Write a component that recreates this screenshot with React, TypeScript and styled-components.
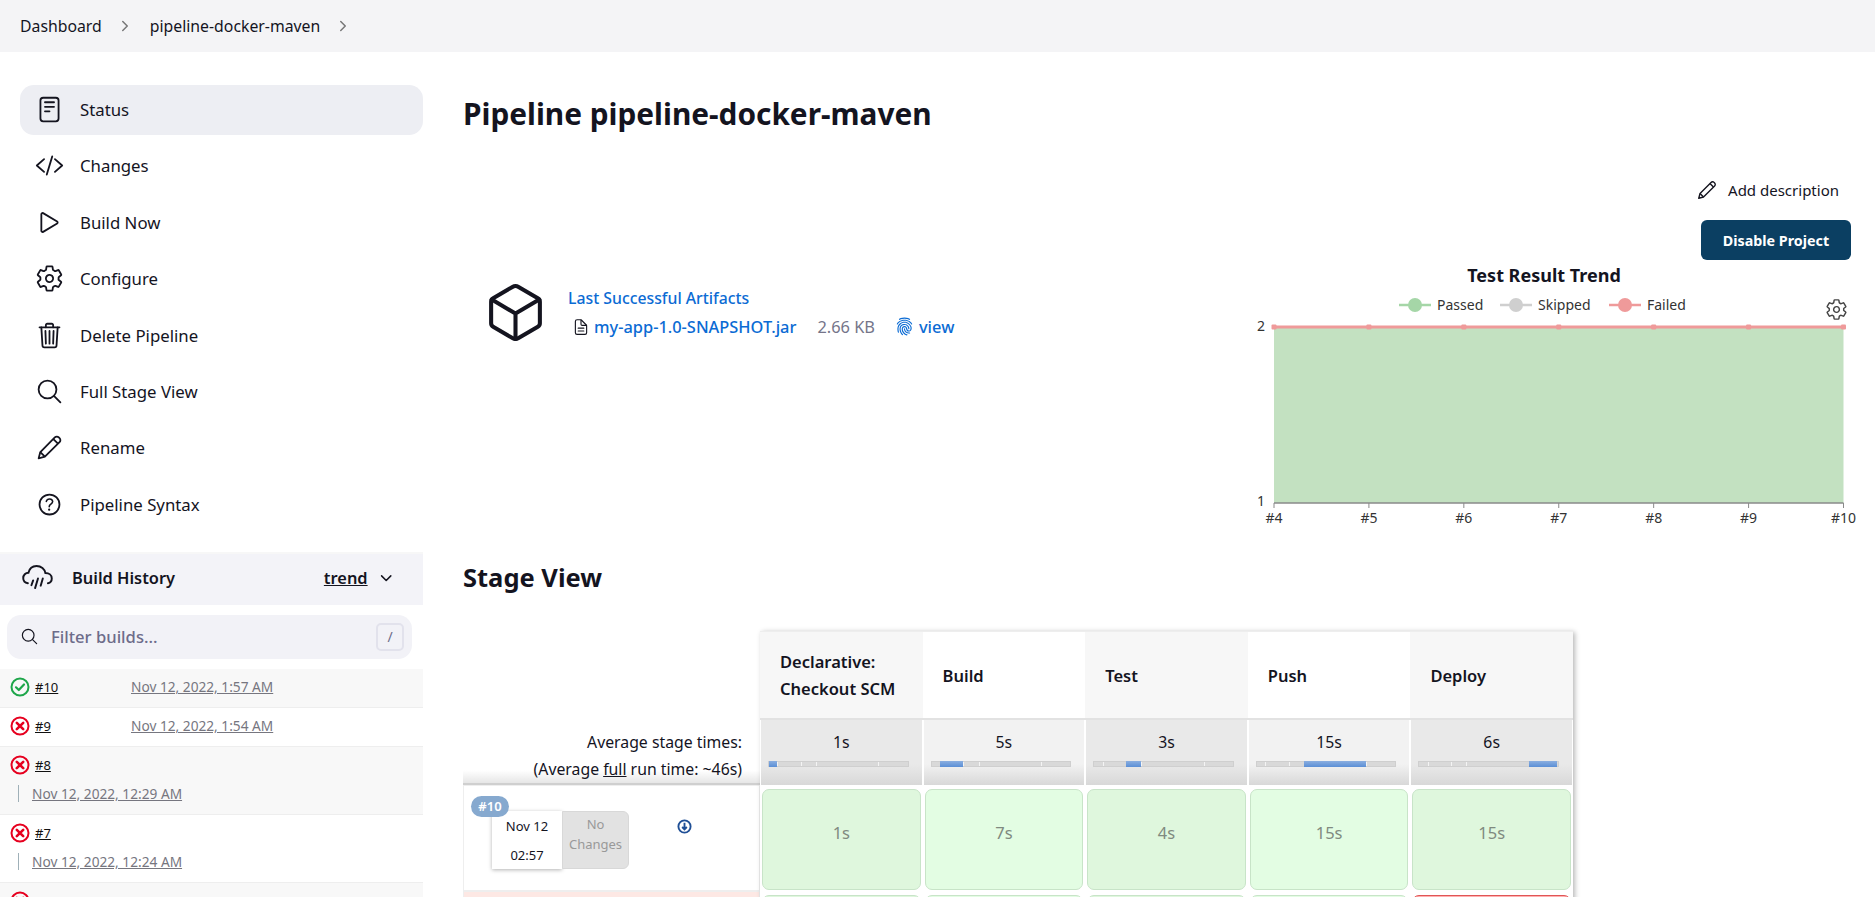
import React from 'react';
import styled, { createGlobalStyle } from 'styled-components';
import {
  IoReaderOutline,
  IoCodeSlashOutline,
  IoPlayOutline,
  IoSettingsOutline,
  IoTrashOutline,
  IoSearchOutline,
  IoHelpCircleOutline,
  IoChevronForward,
  IoChevronDown,
  IoCubeOutline,
  IoDocumentTextOutline,
  IoFingerPrint,
} from 'react-icons/io5';

const GlobalStyle = createGlobalStyle`
  html, body {
    margin: 0;
    height: 100%;
    overflow: hidden;
    background: #fff;
    font-family: 'Noto Sans', 'Open Sans', sans-serif;
    color: #14141f;
  }
  * { box-sizing: border-box; }
`;

const Page = styled.div`
  height: 897px;
  overflow: hidden;
`;

const Breadcrumb = styled.nav`
  height: 52px;
  background: #f4f4f6;
  display: flex;
  align-items: center;
  padding-left: 20px;
  font-size: 15.8px;
  svg { color: #777; font-size: 16px; margin: 0 17px 0 15px; }
`;

const Body = styled.div`
  display: flex;
`;

const Side = styled.aside`
  width: 423px;
  flex: none;
  padding-top: 33px;
`;

const TaskList = styled.ul`
  list-style: none;
  margin: 0 0 0 20px;
  padding: 0;
`;

const Task = styled.li<{ $active?: boolean }>`
  height: 50px;
  margin-bottom: 6.4px;
  display: flex;
  align-items: center;
  gap: 16px;
  padding: 0 0 1px 15px;
  border-radius: 14px;
  font-size: 16.8px;
  background: ${({ $active }) => ($active ? '#edeef3' : 'transparent')};
  svg { width: 29px; height: 29px; flex: none; }
`;

const HistoryHeader = styled.div`
  margin-top: 22px;
  height: 53px;
  background: #f3f3f8;
  border-top: 2px solid #f7f7f7;
  display: flex;
  align-items: center;
  padding: 0 29px 3px 22px;
  font-size: 16.4px;
  font-weight: 600;
`;

const CloudIcon = styled.svg`
  width: 31px;
  height: 27px;
  margin-right: 19px;
  flex: none;
`;

const HistoryTitle = styled.span`
  flex: 1;
`;

const TrendLink = styled.span`
  text-decoration: underline;
  margin-right: 10px;
`;

const FilterBox = styled.div`
  margin: 10px 11px 10px 7px;
  height: 44px;
  background: #f2f2f7;
  border-radius: 14px;
  display: flex;
  align-items: center;
  padding: 0 8px 0 13px;
  font-size: 16.6px;
  font-weight: 500;
  color: #6d6c8a;
  svg { font-size: 19px; color: #14141f; margin-right: 12px; }
`;

const FilterText = styled.span`
  flex: 1;
`;

const SlashKey = styled.span`
  width: 28px;
  height: 28px;
  border: 2px solid #e2e2ec;
  border-radius: 5px;
  display: flex;
  align-items: center;
  justify-content: center;
  font-size: 14px;
  font-weight: 400;
`;

const BuildRow = styled.div<{ $tall?: boolean; $shaded?: boolean }>`
  height: ${({ $tall }) => ($tall ? '68px' : '39px')};
  background: ${({ $shaded }) => ($shaded ? '#f8f8f8' : '#fff')};
  border-bottom: 1px solid #eeeeee;
  padding: 8px 0 0 10px;
`;

const BuildTop = styled.div`
  display: flex;
  align-items: center;
  gap: 5px;
  height: 20px;
`;

const BuildNumber = styled.span`
  width: 91px;
  color: #111;
  text-decoration: underline;
  font-size: 13px;
`;

const BuildDate = styled.span`
  color: #76767f;
  text-decoration: underline;
  font-size: 13.7px;
`;

const BuildDetail = styled.div`
  margin: 10px 0 0 8px;
  padding-left: 13px;
  line-height: 16px;
  border-left: 1px solid #9fb0b8;
`;

const Main = styled.main`
  flex: 1;
  min-width: 0;
  padding: 44px 24px 0 40px;
`;

const Title = styled.h1`
  margin: 0;
  font-size: 29.8px;
  line-height: 36px;
  font-weight: 700;
`;

const Actions = styled.div`
  margin-top: 46px;
  display: flex;
  flex-direction: column;
  align-items: flex-end;
`;

const AddDescription = styled.div`
  height: 24px;
  display: flex;
  align-items: center;
  gap: 10px;
  padding-right: 12px;
  font-size: 15px;
  svg { width: 22px; height: 22px; }
`;

const DisableButton = styled.button`
  margin-top: 18px;
  width: 150px;
  height: 40px;
  border: 0;
  border-radius: 6px;
  background: #0b3f62;
  color: #fff;
  font: 700 14.3px 'Noto Sans', sans-serif;
`;

const Summary = styled.div`
  display: flex;
  justify-content: space-between;
  height: 270px;
`;

const Artifacts = styled.div`
  display: flex;
  gap: 20px;
  padding: 20px 0 0 20px;
`;

const CubeIcon = styled(IoCubeOutline)`
  font-size: 65px;
`;

const ArtifactText = styled.div`
  padding-top: 7px;
  color: #0b6bd4;
  font-size: 15.8px;
  font-weight: 500;
`;

const ArtifactRow = styled.div`
  margin: 6px 0 0 4px;
  display: flex;
  align-items: center;
  font-size: 16.4px;
  svg { flex: none; }
`;

const FileIcon = styled(IoDocumentTextOutline)`
  color: #14141f;
  font-size: 18px;
  margin-right: 4px;
`;

const FileSize = styled.span`
  color: #75758a;
  font-weight: 400;
  margin: 0 20px 0 21px;
`;

const PrintIcon = styled(IoFingerPrint)`
  font-size: 19px;
  margin-right: 5px;
`;

const ChartSvg = styled.svg`
  width: 635px;
  height: 270px;
  margin-right: -24px;
  flex: none;
  font-family: 'Noto Sans', sans-serif;
`;

const StageHeading = styled.h2`
  margin: 31px 0 0;
  font-size: 25.5px;
  line-height: 32px;
  font-weight: 700;
`;

const StageGrid = styled.div`
  position: relative;
  margin-top: 38px;
  display: grid;
  grid-template-columns: 297px repeat(5, 162.6px);
  grid-template-rows: 89px 65px 106px 106px;
  width: 1110px;
  &::after {
    content: '';
    position: absolute;
    left: 297px;
    right: 0;
    top: 0;
    bottom: 0;
    pointer-events: none;
    box-shadow: 2px 1px 5px rgba(0, 0, 0, 0.28);
  }
`;

const LeftBlank = styled.div``;

const StageHead = styled.div<{ $odd: boolean }>`
  background: ${({ $odd }) => ($odd ? '#f7f7f7' : '#fff')};
  border-top: 1px solid #eee;
  border-bottom: 2px solid #e2e2e2;
  display: flex;
  align-items: center;
  padding: 0 20px;
  font-size: 16.5px;
  font-weight: 600;
  line-height: 27px;
`;

const AverageLabel = styled.div`
  background: linear-gradient(#fff 80%, #e6e6e6);
  border-bottom: 2px solid #cfcfcf;
  text-align: right;
  padding: 9px 18px 0 0;
  font-size: 15.8px;
  line-height: 27px;
`;

const FullWord = styled.span`
  text-decoration: underline;
`;

const AverageCell = styled.div<{ $odd: boolean }>`
  background: linear-gradient(${({ $odd }) => ($odd ? '#e9e9e9' : '#f2f2f2')} 68%, #d8d8d8);
  border-left: 1px solid #fff;
  border-right: 1px solid #fff;
  padding: 10px 8px 0;
  text-align: center;
  font-size: 15.8px;
  line-height: 24px;
`;

const TimeBar = styled.div`
  position: relative;
  height: 6px;
  margin: 7px 5px 0 -1px;
  background: #d9d9d9;
  border: 1px solid #cfcfcf;
`;

const TimeTick = styled.i`
  position: absolute;
  top: 0;
  bottom: 0;
  width: 1px;
  background: #f4f4f4;
`;

const TimeFill = styled.i`
  position: absolute;
  top: -1px;
  bottom: -1px;
  background: linear-gradient(#8aaee0, #5b8fd6);
`;

const BuildCell = styled.div<{ $failed?: boolean }>`
  position: relative;
  border: 1px solid #eee;
  background: ${({ $failed }) => ($failed ? '#fde8e4' : '#fff')};
`;

const BuildBadge = styled.span`
  position: absolute;
  left: 7px;
  top: 10px;
  z-index: 1;
  width: 38px;
  height: 21px;
  border-radius: 11px;
  background: #86a9cf;
  color: #fff;
  font-size: 13px;
  font-weight: 600;
  text-align: center;
  line-height: 21px;
`;

const BuildCard = styled.div`
  margin: 25px 0 0 28px;
  display: flex;
  height: 58px;
  width: 137px;
`;

const DateBox = styled.div`
  width: 70px;
  background: #fff;
  padding-top: 1px;
  box-shadow: 0 1px 4px rgba(0, 0, 0, 0.3);
  text-align: center;
  font-size: 13px;
  line-height: 29px;
`;

const ChangesBox = styled.div`
  width: 67px;
  background: #e2e2e2;
  border-radius: 0 6px 6px 0;
  border: 1px solid #d8d8d8;
  color: #999;
  text-align: center;
  font-size: 13px;
  line-height: 20px;
  padding-top: 2px;
`;

const DownloadIcon = styled.svg`
  position: absolute;
  left: 213px;
  top: 33px;
`;

const StageCell = styled.div<{ $odd: boolean; $failed?: boolean }>`
  margin: 4px 2px 1px;
  border-radius: 7px;
  border: 1px solid ${({ $failed }) => ($failed ? '#e05555' : '#c8e4c8')};
  background: ${({ $odd, $failed }) => ($failed ? '#ffb0b0' : $odd ? '#dff7dd' : '#e3fde3')};
  color: #808a80;
  display: flex;
  align-items: center;
  justify-content: center;
  font-size: 16.5px;
  padding-bottom: 14px;
`;

function PencilIcon() {
  return (
    <svg viewBox="0 0 24 24" fill="none" stroke="currentColor" strokeWidth="1.5" strokeLinejoin="round">
      <path d="M3 21l1.4-5.2L16.4 3.7a2.3 2.3 0 0 1 3.3 0l.6.6a2.3 2.3 0 0 1 0 3.3L8.2 19.6z" />
      <path d="M4.4 15.8l3.8 3.8M15.2 5l3.8 3.8" />
    </svg>
  );
}

const tasks = [
  { label: 'Status', icon: <IoReaderOutline />, active: true },
  { label: 'Changes', icon: <IoCodeSlashOutline /> },
  { label: 'Build Now', icon: <IoPlayOutline /> },
  { label: 'Configure', icon: <IoSettingsOutline /> },
  { label: 'Delete Pipeline', icon: <IoTrashOutline /> },
  { label: 'Full Stage View', icon: <IoSearchOutline /> },
  { label: 'Rename', icon: <PencilIcon /> },
  { label: 'Pipeline Syntax', icon: <IoHelpCircleOutline /> },
];

const builds = [
  { id: '#10', date: 'Nov 12, 2022, 1:57 AM', ok: true },
  { id: '#9', date: 'Nov 12, 2022, 1:54 AM' },
  { id: '#8', date: 'Nov 12, 2022, 12:29 AM', tall: true },
  { id: '#7', date: 'Nov 12, 2022, 12:24 AM', tall: true },
  { id: '#6', date: 'Nov 12, 2022, 12:20 AM', tall: true },
];

const stages = [
  { name: 'Declarative: Checkout SCM', avg: '1s', left: 0, width: 6, run: '1s' },
  { name: 'Build', avg: '5s', left: 6, width: 17, run: '7s' },
  { name: 'Test', avg: '3s', left: 23, width: 11, run: '4s' },
  { name: 'Push', avg: '15s', left: 34, width: 45, run: '15s' },
  { name: 'Deploy', avg: '6s', left: 79, width: 20, run: '15s' },
];

const ticks = [6, 23, 34, 79];

const trendRuns = ['#4', '#5', '#6', '#7', '#8', '#9', '#10'];

const legend = [
  { label: 'Passed', color: '#a5d6a7', x: 159 },
  { label: 'Skipped', color: '#cfcfcf', x: 260 },
  { label: 'Failed', color: '#ef9a9a', x: 369 },
];

function StatusIcon({ ok }: { ok?: boolean }) {
  const color = ok ? '#1ea64a' : '#e6001f';
  return (
    <svg width="20" height="20" viewBox="0 0 20 20" fill="none">
      <circle cx="10" cy="10" r="8.5" stroke={color} strokeWidth="2" />
      {ok ? (
        <path d="M6 10.3l2.8 2.7L14 7.5" stroke={color} strokeWidth="2.2" strokeLinecap="round" strokeLinejoin="round" />
      ) : (
        <path d="M6.8 6.8l6.4 6.4M13.2 6.8l-6.4 6.4" stroke={color} strokeWidth="2.6" strokeLinecap="round" />
      )}
    </svg>
  );
}

function TrendChart() {
  const plotWidth = 569.5;
  const step = plotWidth / 6;
  return (
    <ChartSvg viewBox="0 0 635 270">
      <text x="304" y="22" textAnchor="middle" fontSize="18" fontWeight="700" fill="#14141f">
        Test Result Trend
      </text>
      {legend.map((item) => (
        <g key={item.label}>
          <line x1={item.x} x2={item.x + 32} y1="45" y2="45" stroke={item.color} strokeWidth="2.5" />
          <circle cx={item.x + 16} cy="45" r="7" fill={item.color} />
          <text x={item.x + 38} y="50" fontSize="14" fill="#333">
            {item.label}
          </text>
        </g>
      ))}
      <IoSettingsOutline x={585} y={38} size={23} color="#444" />
      <rect x="34" y="67" width={plotWidth} height="176" fill="#c3e1c1" />
      <line x1="34" x2={34 + plotWidth} y1="67" y2="67" stroke="#ef9a9a" strokeWidth="3" />
      <line x1="34" x2={34 + plotWidth} y1="243" y2="243" stroke="#8a8a8a" strokeWidth="1.5" />
      <text x="17" y="71" fontSize="14" fill="#333">2</text>
      <text x="17" y="246" fontSize="14" fill="#333">1</text>
      {trendRuns.map((run, i) => (
        <g key={run}>
          <rect x={34 + step * i - 2.5} y="64.5" width="5" height="5" rx="1" fill="#ef9a9a" />
          <line x1={34 + step * i} x2={34 + step * i} y1="243" y2="248" stroke="#8a8a8a" />
          <text x={34 + step * i} y="263" textAnchor="middle" fontSize="14" fill="#333">
            {run}
          </text>
        </g>
      ))}
    </ChartSvg>
  );
}

export default function App() {
  return (
    <Page>
      <GlobalStyle />
      <Breadcrumb>
        Dashboard
        <IoChevronForward />
        pipeline-docker-maven
        <IoChevronForward />
      </Breadcrumb>
      <Body>
        <Side>
          <TaskList>
            {tasks.map((task) => (
              <Task key={task.label} $active={task.active}>
                {task.icon}
                {task.label}
              </Task>
            ))}
          </TaskList>
          <HistoryHeader>
            <CloudIcon viewBox="0 0 32 28" fill="none" stroke="currentColor" strokeWidth="2" strokeLinecap="round">
              <path d="M6 20C3 19.5 1.2 17.2 1.2 14.5c0-3 2.4-5.5 5.4-5.5C7.6 4.6 11 2 15 2c4.8 0 8.5 3.2 9.2 7.4 3.8 0 6.6 2.4 6.6 5.6 0 2.6-1.6 4.5-4 5" />
              <path d="M11.5 17l-1.8 5M16.5 15l-3 10M21.5 15l-2.2 7.5" />
            </CloudIcon>
            <HistoryTitle>Build History</HistoryTitle>
            <TrendLink>trend</TrendLink>
            <IoChevronDown />
          </HistoryHeader>
          <FilterBox>
            <IoSearchOutline />
            <FilterText>Filter builds...</FilterText>
            <SlashKey>/</SlashKey>
          </FilterBox>
          {builds.map((build, i) => (
            <BuildRow key={build.id} $tall={build.tall} $shaded={i % 2 === 0}>
              <BuildTop>
                <StatusIcon ok={build.ok} />
                <BuildNumber>{build.id}</BuildNumber>
                {!build.tall && <BuildDate>{build.date}</BuildDate>}
              </BuildTop>
              {build.tall && (
                <BuildDetail>
                  <BuildDate>{build.date}</BuildDate>
                </BuildDetail>
              )}
            </BuildRow>
          ))}
        </Side>
        <Main>
          <Title>Pipeline pipeline-docker-maven</Title>
          <Actions>
            <AddDescription>
              <PencilIcon />
              Add description
            </AddDescription>
            <DisableButton>Disable Project</DisableButton>
          </Actions>
          <Summary>
            <Artifacts>
              <CubeIcon />
              <ArtifactText>
                Last Successful Artifacts
                <ArtifactRow>
                  <FileIcon />
                  my-app-1.0-SNAPSHOT.jar
                  <FileSize>2.66 KB</FileSize>
                  <PrintIcon />
                  view
                </ArtifactRow>
              </ArtifactText>
            </Artifacts>
            <TrendChart />
          </Summary>
          <StageHeading>Stage View</StageHeading>
          <StageGrid>
            <LeftBlank />
            {stages.map((stage, i) => (
              <StageHead key={stage.name} $odd={i % 2 === 0}>
                {stage.name}
              </StageHead>
            ))}
            <AverageLabel>
              Average stage times:
              <br />
              (Average <FullWord>full</FullWord> run time: ~46s)
            </AverageLabel>
            {stages.map((stage, i) => (
              <AverageCell key={stage.name} $odd={i % 2 === 0}>
                {stage.avg}
                <TimeBar>
                  {ticks.map((tick) => (
                    <TimeTick key={tick} style={{ left: `${tick}%` }} />
                  ))}
                  <TimeFill style={{ left: `${stage.left}%`, width: `${stage.width}%` }} />
                </TimeBar>
              </AverageCell>
            ))}
            <BuildCell>
              <BuildBadge>#10</BuildBadge>
              <BuildCard>
                <DateBox>
                  Nov 12
                  <br />
                  02:57
                </DateBox>
                <ChangesBox>
                  No
                  <br />
                  Changes
                </ChangesBox>
              </BuildCard>
              <DownloadIcon width="15" height="15" viewBox="0 0 16 16" fill="none">
                <circle cx="8" cy="8" r="6.5" stroke="#1f4f96" strokeWidth="2" />
                <path d="M8 4v7M5.5 8.5L8 11l2.5-2.5" stroke="#1f4f96" strokeWidth="2" />
              </DownloadIcon>
            </BuildCell>
            {stages.map((stage, i) => (
              <StageCell key={stage.name} $odd={i % 2 === 0}>
                {stage.run}
              </StageCell>
            ))}
            <BuildCell $failed />
            {stages.map((stage, i) => (
              <StageCell key={stage.name} $odd={i % 2 === 0} $failed={i === 4} />
            ))}
          </StageGrid>
        </Main>
      </Body>
    </Page>
  );
}
